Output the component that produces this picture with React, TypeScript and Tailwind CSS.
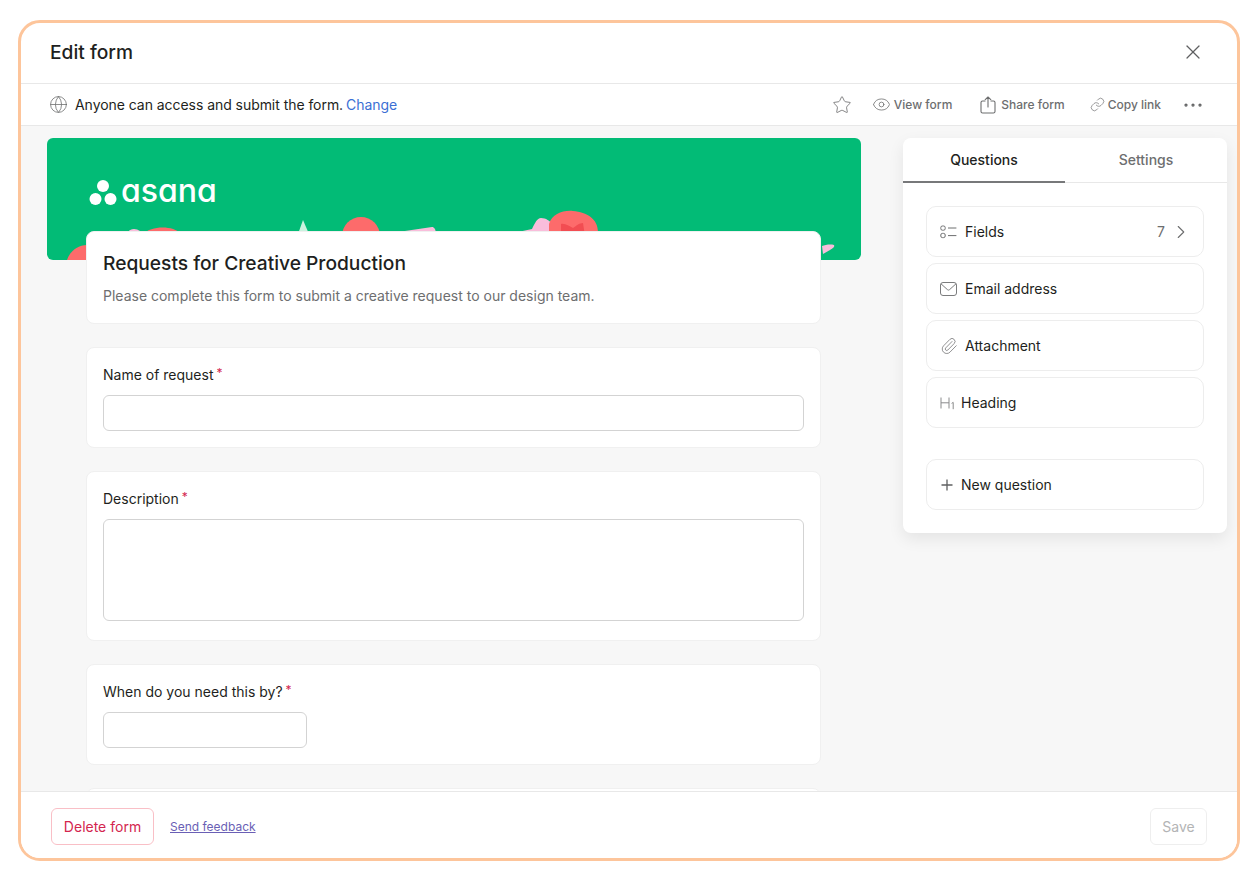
import { ChevronRight, Eye, Globe, Link, MoreHorizontal, Paperclip, Star, X } from "lucide-react";
import type { ReactNode } from "react";

function ShareIcon() {
  return (
    <svg width="16" height="18" viewBox="0 0 16 18" fill="none" stroke="#6d6e6f" strokeWidth="1.1" strokeLinecap="round" strokeLinejoin="round">
      <path d="M5 5H2.6A1.6 1.6 0 0 0 1 6.6v8.8A1.6 1.6 0 0 0 2.6 17h10.8a1.6 1.6 0 0 0 1.6-1.6V6.6A1.6 1.6 0 0 0 13.4 5H11" />
      <path d="M8 11V1M5.2 3.6 8 1l2.8 2.6" />
    </svg>
  );
}

function FieldsIcon() {
  return (
    <svg width="17" height="14" viewBox="0 0 17 14" fill="none" stroke="#6d6e6f" strokeWidth="1">
      <rect x="0.8" y="1" width="4.4" height="4.2" rx="1.6" />
      <rect x="0.8" y="8.4" width="4.4" height="4.2" rx="1.6" />
      <path d="M8 3h8.4M8 10.6h8.4" />
    </svg>
  );
}

function MailIcon() {
  return (
    <svg width="17" height="14" viewBox="0 0 17 14" fill="none" stroke="#7b7c7d" strokeWidth="1" strokeLinejoin="round">
      <rect x="0.5" y="0.5" width="16" height="13" rx="2.5" />
      <path d="M1 1.8 7.4 7.6a1.6 1.6 0 0 0 2.2 0L16 1.8" />
    </svg>
  );
}

function HeadingIcon() {
  return (
    <svg width="15" height="14" viewBox="0 0 15 14" fill="none" stroke="#8a8b8c" strokeWidth="1">
      <path d="M1 1.5v11M9 1.5v11M1 6.8h8M11.6 7.4l1.6-1v6.8" />
    </svg>
  );
}

function PlusIcon() {
  return (
    <svg className="ml-px" width="12" height="12" viewBox="0 0 12 12" fill="none" stroke="#5f6061" strokeWidth="1.3">
      <path d="M6 .5v11M.5 6h11" />
    </svg>
  );
}

function Banner() {
  return (
    <div className="relative h-[122px] rounded-[6px] bg-[#02bb76] overflow-hidden pl-[41px] pt-[40px]">
      <svg className="absolute left-0 top-0" width="814" height="122" viewBox="0 0 814 122">
        <path d="M20 122c3-9 11-15 20-15 8 0 14 3 20 15z" fill="#fd6b6b" />
        <path d="M80 95c3-5 9-5 13-2l8 4H78z" fill="#f9bddb" />
        <path d="M96 96c8-8 30-9 38 0l-40 2z" fill="#fd6b6b" />
        <path d="M256 82l6 14h-11z" fill="#c9f2de" />
        <circle cx="314" cy="98" r="19" fill="#fd6b6b" />
        <path d="M351 94l34-5c2 0 4 2 4 8h-38z" fill="#f9bddb" />
        <path d="M453 95c4-2 10-2 17 1l-17 2z" fill="#fd6b6b" />
        <path d="M471 94l14-3c3-6 5-11 9-11 5 0 9 3 11 6v14h-34z" fill="#f9bddb" />
        <path d="M502 86c3-10 14-14 24-13 14 1 25 8 25 21l-1 6h-48z" fill="#fd6b6b" />
        <path d="M514 86c4-1 8 2 12 4 3-2 6-5 10-5l2 13h-24z" fill="#f24d52" />
        <path d="M775 108c3-1 8-2 12-1 1 2-1 3-4 5l-7 4z" fill="#f9bddb" />
      </svg>
      <div className="relative flex items-center gap-[4px] text-white">
        <svg width="30" height="28" viewBox="0 0 30 28" fill="#ffffff">
          <circle cx="15" cy="8" r="6" />
          <circle cx="7.5" cy="21" r="6" />
          <circle cx="22.5" cy="21" r="6" />
        </svg>
        <span className="-mt-[2px] -ml-[1px] text-[32px] leading-[30px] font-medium [font-feature-settings:'cv11']">asana</span>
      </div>
    </div>
  );
}

function Required({ label }: { label: string }) {
  return (
    <label className="flex items-start text-[14px] leading-[20px] text-[#1e1f21]">
      {label}
      <span className="text-[#d3254e] text-[12px] leading-[16px] ml-[3px]">*</span>
    </label>
  );
}

function FieldCard({ children, className }: { children: ReactNode; className?: string }) {
  return <div className={"bg-white border border-[#f0f0f0] rounded-[8px] px-[16px] pt-[17px] " + (className ?? "")}>{children}</div>;
}

function PanelRow({ icon, label, gap, right }: { icon: ReactNode; label: string; gap: string; right?: ReactNode }) {
  return (
    <div className="h-[51px] flex items-center pl-[13px] pr-[15px] bg-white border border-[#ededed] rounded-[10px] text-[14px] text-[#1e1f21]">
      <span className={"flex items-center shrink-0 " + gap}>{icon}</span>
      <span>{label}</span>
      {right}
    </div>
  );
}

export default function App() {
  return (
    <div className="h-[881px] bg-white pt-[20px] px-[18px] font-['Inter','Liberation_Sans',sans-serif]">
      <div className="w-[1222px] h-[841px] flex flex-col border-[3px] border-[#fdc59b] rounded-[22px] overflow-hidden bg-white">
        {/* Header */}
        <div className="h-[61px] shrink-0 flex items-center justify-between pl-[29px] pr-[32px] pb-[2px] border-b border-[#e8e8e8]">
          <h1 className="text-[19.2px] font-medium text-[#1e1f21]">Edit form</h1>
          <X className="w-[24px] h-[24px] text-[#5f6061]" strokeWidth={1.2} />
        </div>

        {/* Access bar */}
        <div className="h-[42px] shrink-0 flex items-center pl-[29px] pr-[32px] border-b border-[#e8e8e8]">
          <Globe className="-ml-px w-[19px] h-[19px] text-[#6d6e6f]" strokeWidth={1} />
          <span className="ml-[7px] text-[14px] tracking-[-0.05px] text-[#1e1f21]">Anyone can access and submit the form.</span>
          <span className="ml-[3px] text-[14px] tracking-[-0.05px] text-[#3b6fd4]">Change</span>
          <div className="ml-auto flex items-center text-[12px] font-medium text-[#6d6e6f]">
            <Star className="w-[20px] h-[20px]" strokeWidth={1} />
            <Eye className="ml-[20px] w-[19px] h-[19px]" strokeWidth={1} />
            <span className="ml-[3px]">View form</span>
            <span className="ml-[28px]"><ShareIcon /></span>
            <span className="ml-[5px]">Share form</span>
            <Link className="ml-[25px] w-[15px] h-[15px]" strokeWidth={1.1} />
            <span className="ml-[3px]">Copy link</span>
            <MoreHorizontal className="ml-[20px] w-[24px] h-[24px] text-[#5f6061]" strokeWidth={1.25} />
          </div>
        </div>

        {/* Body */}
        <div className="flex-1 min-h-0 overflow-hidden bg-[#f7f7f7] flex items-start pt-[12px] pl-[26px]">
          <div className="w-[814px] shrink-0">
            <Banner />
            <div className="relative -mt-[29px] ml-[39px] mr-[40px] flex flex-col gap-[23px]">
              <div className="h-[93px] bg-white border border-[#f0f0f0] rounded-[8px] px-[16px] pt-[17px]">
                <h2 className="text-[19.2px] leading-[28px] font-medium text-[#1e1f21]">Requests for Creative Production</h2>
                <p className="mt-[9px] text-[14px] leading-[20px] text-[#6d6e6f]">Please complete this form to submit a creative request to our design team.</p>
              </div>
              <FieldCard className="h-[101px]">
                <Required label="Name of request" />
                <div className="mt-[10px] h-[36px] border border-[#d3d3d3] rounded-[6px] bg-white" />
              </FieldCard>
              <FieldCard className="h-[170px]">
                <Required label="Description" />
                <div className="mt-[10px] h-[102px] border border-[#d3d3d3] rounded-[6px] bg-white" />
              </FieldCard>
              <FieldCard className="h-[101px]">
                <Required label="When do you need this by?" />
                <div className="mt-[10px] w-[204px] h-[36px] border border-[#d3d3d3] rounded-[6px] bg-white" />
              </FieldCard>
              <FieldCard className="h-[100px]">{null}</FieldCard>
            </div>
          </div>

          {/* Right panel */}
          <div className="ml-[42px] w-[324px] h-[395px] shrink-0 bg-white rounded-[8px] shadow-[0_6px_16px_rgba(0,0,0,0.08)]">
            <div className="flex h-[45px] border-b border-[#e8e8e8] text-[14px] font-medium">
              <div className="w-[162px] flex items-center justify-center text-[#1e1f21] border-b-2 border-[#77787a] -mb-px">Questions</div>
              <div className="flex-1 flex items-center justify-center pb-[2px] text-[#6d6e6f]">Settings</div>
            </div>
            <div className="px-[23px] pt-[23px] flex flex-col gap-[6px]">
              <PanelRow
                icon={<FieldsIcon />}
                label="Fields"
                gap="w-[25px]"
                right={
                  <span className="ml-auto flex items-center text-[#6d6e6f]">
                    7
                    <ChevronRight className="ml-[5px] -mr-[4px] w-[22px] h-[22px]" strokeWidth={1.2} />
                  </span>
                }
              />
              <PanelRow icon={<MailIcon />} label="Email address" gap="w-[25px]" />
              <PanelRow icon={<Paperclip className="w-[18px] h-[18px] text-[#6d6e6f]" strokeWidth={1} />} label="Attachment" gap="w-[25px]" />
              <PanelRow icon={<HeadingIcon />} label="Heading" gap="w-[21px]" />
              <div className="mt-[25px]">
                <PanelRow icon={<PlusIcon />} label="New question" gap="w-[21px]" />
              </div>
            </div>
          </div>
        </div>

        {/* Footer */}
        <div className="h-[67px] shrink-0 relative z-10 flex items-center pl-[30px] pr-[30px] pt-[3px] bg-white border-t border-[#e8e8e8]">
          <button className="h-[37px] w-[103px] border border-[#f9bfc6] rounded-[6px] text-[14px] text-[#d3254e]">Delete form</button>
          <a className="ml-[16px] text-[12px] text-[#6a5fb5] underline">Send feedback</a>
          <button className="ml-auto h-[37px] w-[57px] border border-[#eeeeee] rounded-[6px] text-[14px] text-[#b3b4b5]">Save</button>
        </div>
      </div>
    </div>
  );
}
